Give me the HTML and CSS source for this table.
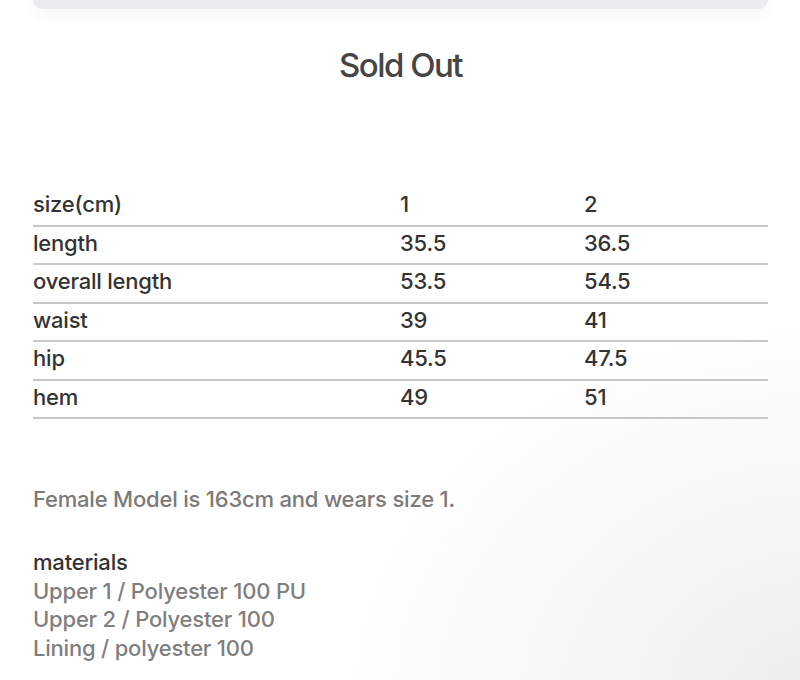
FILE: index.html
```html
<!DOCTYPE html>
<html>
<head>
<meta charset="utf-8">
<link rel="stylesheet" href="styles.css">
</head>
<body>
<div class="page">
  <div class="topbar"></div>
  <h1 class="sold">Sold Out</h1>
  <table class="sizes">
    <tr><td>size(cm)</td><td>1</td><td>2</td></tr>
    <tr><td>length</td><td>35.5</td><td>36.5</td></tr>
    <tr><td>overall length</td><td>53.5</td><td>54.5</td></tr>
    <tr><td>waist</td><td>39</td><td>41</td></tr>
    <tr><td>hip</td><td>45.5</td><td>47.5</td></tr>
    <tr><td>hem</td><td>49</td><td>51</td></tr>
  </table>
  <p class="model">Female Model is 163cm and wears size 1.</p>
  <div class="materials">
    <div class="mat-title">materials</div>
    <div class="mat-line">Upper 1 / Polyester 100 PU</div>
    <div class="mat-line">Upper 2 / Polyester 100</div>
    <div class="mat-line">Lining / polyester 100</div>
  </div>
</div>
</body>
</html>
```
FILE: styles.css
```css
html, body {
  margin: 0;
  padding: 0;
}
body {
  width: 800px;
  height: 680px;
  overflow: hidden;
  background: radial-gradient(ellipse 500px 400px at 820px 700px, #ececec 0%, #f6f6f6 45%, #ffffff 100%);
  font-family: Inter, "Liberation Sans", sans-serif;
  color: #333;
}
.page {
  padding: 0 32px 0 33px;
}
.topbar {
  height: 9px;
  background: #ececee;
  border-radius: 0 0 14px 14px;
  box-shadow: 0 6px 16px rgba(0,0,0,0.06);
}
.sold {
  margin: 36px 0 0;
  text-align: center;
  font-size: 33px;
  font-weight: 500;
  letter-spacing: -1.5px;
  color: #454545;
  line-height: 40px;
}
.sizes {
  margin-top: 103px;
  width: 735px;
  border-collapse: collapse;
  font-size: 22px;
  font-weight: 500;
  letter-spacing: -0.2px;
  color: #333;
}
.sizes td {
  padding: 3px 0 7.5px;
  line-height: 26px;
  border-bottom: 2px solid #c8c8c8;
  vertical-align: top;
}
.sizes td:first-child { width: 367px; }
.sizes td:nth-child(2) { width: 184px; }
.model {
  margin: 66px 0 0;
  font-size: 22px;
  font-weight: 500;
  letter-spacing: -0.2px;
  color: #7a7a7a;
  line-height: 28px;
}
.materials {
  margin-top: 35px;
  font-size: 22px;
  font-weight: 500;
  letter-spacing: -0.2px;
  line-height: 28.5px;
}
.mat-title { color: #333; }
.mat-line { color: #7f7f7f; }
```
